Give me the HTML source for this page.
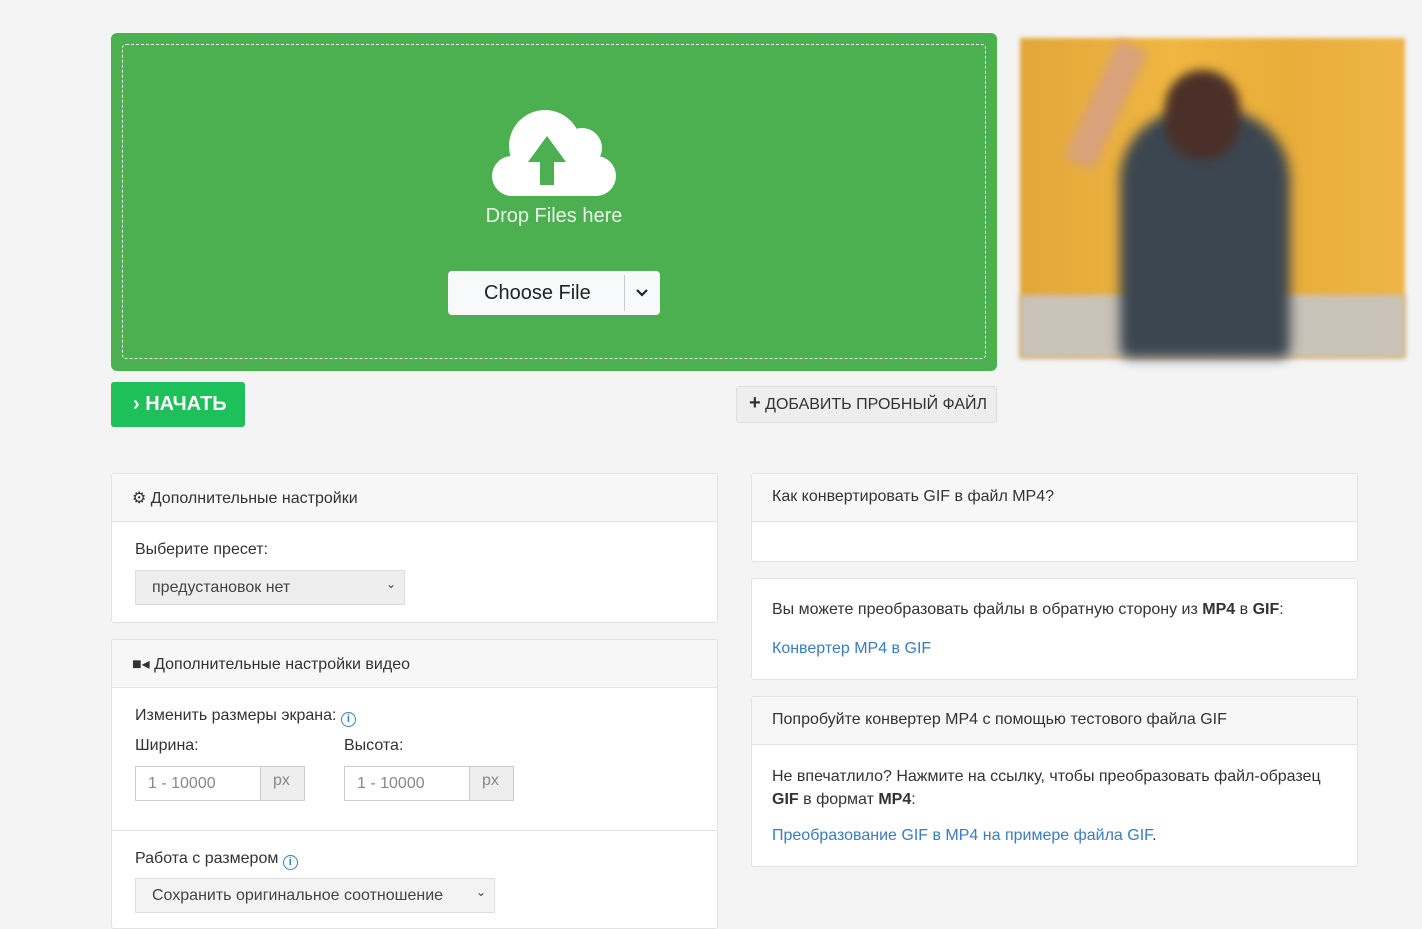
<!DOCTYPE html>
<html><head><meta charset="utf-8"><style>
*{box-sizing:border-box;margin:0;padding:0}
body{width:1422px;height:919px;background:#f4f4f4;font-family:"Liberation Sans","DejaVu Sans",sans-serif;color:#333;position:relative;overflow:hidden;font-size:16px}
.abs{position:absolute}
.drop{left:111px;top:33px;width:886px;height:338px;background:#4caf50;border-radius:6px}
.dash{left:122px;top:44px;width:864px;height:315px;border:1px dashed #e8f5e9;border-radius:4px}
.choose{left:448px;top:271px;width:212px;height:44px;background:#f8f9fa;border-radius:4px;font-size:20px;color:#222}
.panel{background:#fff;border:1px solid #e2e2e2;border-radius:3px}
.ph{background:#f7f7f7;border-bottom:1px solid #e2e2e2;height:48px;padding:14px 20px;font-size:16px;color:#333}
.sel{background:#eee;border:1px solid #ddd;height:35px;padding:8px 16px;font-size:16px;color:#444}
.inp{border:1px solid #ccc;height:35px;display:flex;font-size:16px;color:#888}
.link{color:#3a7cc2}
.info{display:inline-block;width:15px;height:15px;border:1.5px solid #3a7cc2;border-radius:50%;color:#3a7cc2;font-size:11px;text-align:center;line-height:12px;font-weight:bold;vertical-align:-2px}
</style></head><body>
<div class="abs drop"></div>
<div class="abs dash"></div>
<svg class="abs" style="left:490px;top:108px" width="128" height="90" viewBox="0 0 128 90">
<circle cx="55" cy="38" r="36" fill="#fff"/>
<circle cx="92" cy="40" r="20" fill="#fff"/>
<rect x="2" y="48" width="124" height="40" rx="20" fill="#fff"/>
<path d="M50 77 V54 H38 L57 28 L76 54 H64 V77 Z" fill="#4caf50"/>
</svg>
<div class="abs" style="left:454px;top:205px;width:200px;text-align:center;color:#e8f5e9;font-size:20px">Drop Files here</div>
<div class="abs choose"><span class="abs" style="left:36px;top:11px">Choose File</span><div class="abs" style="left:176px;top:4px;width:1px;height:36px;background:#ccc"></div><svg class="abs" style="left:187px;top:16px" width="14" height="12"><path d="M2 3 L7 8 L12 3" stroke="#222" stroke-width="2.2" fill="none"/></svg></div>
<div class="abs" style="left:1020px;top:38px;width:385px;height:320px;background:linear-gradient(90deg,#e2a63a,#f0b640 40%,#e9ad3a 70%,#eeb548);filter:blur(2px)"></div>
<div class="abs" style="left:1020px;top:295px;width:385px;height:63px;background:#c9c2b8;filter:blur(3px)"></div>
<div class="abs" style="left:1120px;top:110px;width:170px;height:248px;background:#3b4650;border-radius:70px 70px 10px 10px;filter:blur(6px)"></div>
<div class="abs" style="left:1165px;top:70px;width:75px;height:90px;background:#4a3028;border-radius:40px;filter:blur(5px)"></div>
<div class="abs" style="left:1090px;top:40px;width:32px;height:130px;background:#d9a27a;transform:rotate(25deg);filter:blur(5px)"></div>
<div class="abs" style="left:111px;top:382px;width:134px;height:45px;background:#1ec05a;border-radius:3px;color:#fff;font-size:20px;font-weight:bold;padding:11px 0 0 22px">›&nbsp;НАЧАТЬ</div>
<div class="abs" style="left:736px;top:386px;width:261px;height:37px;background:#eee;border:1px solid #ddd;border-radius:3px;font-size:16px;color:#333;padding:8px 0 0 12px"><b style="font-size:20px;line-height:16px">+</b> ДОБАВИТЬ ПРОБНЫЙ ФАЙЛ</div>

<div class="abs panel" style="left:111px;top:473px;width:607px;height:150px">
<div class="ph">⚙ Дополнительные настройки</div>
<div class="abs" style="left:23px;top:67px">Выберите пресет:</div>
<div class="abs sel" style="left:23px;top:96px;width:270px">предустановок нет<span class="abs" style="right:8px;top:6px;font-size:12px">⌄</span></div>
</div>
<div class="abs panel" style="left:111px;top:639px;width:607px;height:290px">
<div class="ph">■◂ Дополнительные настройки видео</div>
<div class="abs" style="left:23px;top:67px">Изменить размеры экрана: <span class="info">i</span></div>
<div class="abs" style="left:23px;top:97px">Ширина:</div>
<div class="abs" style="left:232px;top:97px">Высота:</div>
<div class="abs inp" style="left:23px;top:126px;width:170px"><span style="padding:8px 12px;width:124px;background:#fff">1 - 10000</span><span style="flex:1;background:#eee;border-left:1px solid #ccc;padding:5px 12px">px</span></div>
<div class="abs inp" style="left:232px;top:126px;width:170px"><span style="padding:8px 12px;width:124px;background:#fff">1 - 10000</span><span style="flex:1;background:#eee;border-left:1px solid #ccc;padding:5px 12px">px</span></div>
<div class="abs" style="left:0;top:190px;width:605px;height:1px;background:#e2e2e2"></div>
<div class="abs" style="left:23px;top:210px">Работа с размером <span class="info">i</span></div>
<div class="abs sel" style="left:23px;top:238px;width:360px;background:#f3f3f3">Сохранить оригинальное соотношение<span class="abs" style="right:8px;top:6px;font-size:12px">⌄</span></div>
</div>

<div class="abs panel" style="left:751px;top:473px;width:607px;height:89px"><div class="ph">Как конвертировать GIF в файл MP4?</div></div>
<div class="abs panel" style="left:751px;top:578px;width:607px;height:102px">
<div class="abs" style="left:20px;top:22px">Вы можете преобразовать файлы в обратную сторону из <b>MP4</b> в <b>GIF</b>:</div>
<div class="abs link" style="left:20px;top:61px">Конвертер MP4 в GIF</div></div>
<div class="abs panel" style="left:751px;top:696px;width:607px;height:171px">
<div class="ph">Попробуйте конвертер MP4 с помощью тестового файла GIF</div>
<div class="abs" style="left:20px;top:68px;width:575px;line-height:23px">Не впечатлило? Нажмите на ссылку, чтобы преобразовать файл-образец <b>GIF</b> в формат <b>MP4</b>:</div>
<div class="abs" style="left:20px;top:130px"><span class="link">Преобразование GIF в MP4 на примере файла GIF</span>.</div></div>
</body></html>
